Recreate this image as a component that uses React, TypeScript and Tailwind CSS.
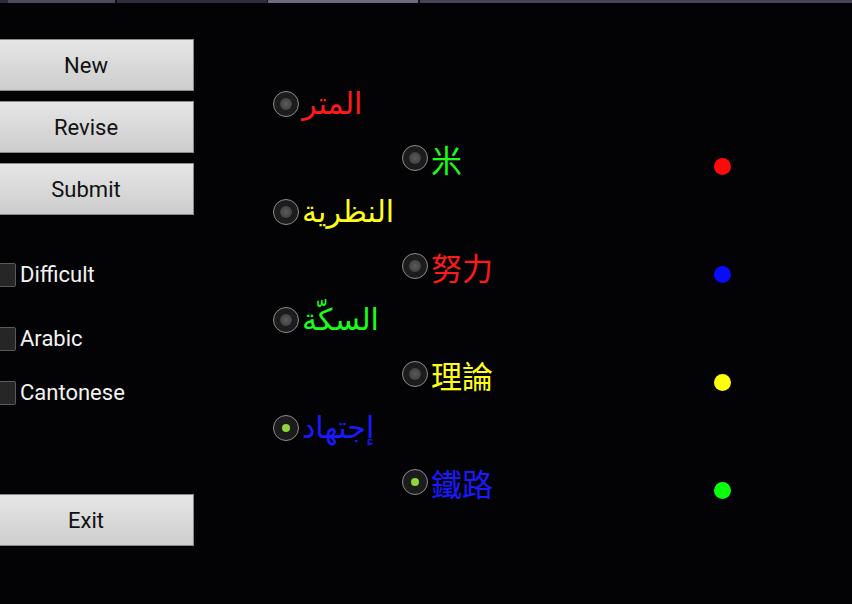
import React from 'react'

const rows = [
  { text: 'المتر', color: 'text-[#ff1a1a]', indent: false, checked: false, ar: true },
  { text: '米', color: 'text-[#1aff1a]', indent: true, checked: false, ar: false },
  { text: 'النظرية', color: 'text-[#ffff1a]', indent: false, checked: false, ar: true },
  { text: '努力', color: 'text-[#ff1a1a]', indent: true, checked: false, ar: false },
  { text: 'السكّة', color: 'text-[#1aff1a]', indent: false, checked: false, ar: true },
  { text: '理論', color: 'text-[#ffff1a]', indent: true, checked: false, ar: false },
  { text: 'إجتهاد', color: 'text-[#1a1aff]', indent: false, checked: true, ar: true },
  { text: '鐵路', color: 'text-[#1a1aff]', indent: true, checked: true, ar: false },
]

function GrayButton({ label }: { label: string }) {
  return (
    <button className="-ml-[22px] h-[52px] w-[216px] shrink-0 border border-[#8a8a8a] bg-gradient-to-b from-[#e6e6e6] to-[#cdcdcd] text-[22px] text-[#111] font-['Roboto',sans-serif]">
      {label}
    </button>
  )
}

function Check({ label, className = '' }: { label: string; className?: string }) {
  return (
    <div className={`flex h-[30px] items-center gap-[4px] ${className}`}>
      <div className="-ml-[8px] h-[24px] w-[24px] shrink-0 rounded-[2px] border border-[#5a5a5a] bg-[#262626]" />
      <span className="text-[22px] leading-none text-[#f2f2f2] font-['Roboto',sans-serif]">{label}</span>
    </div>
  )
}

function Radio({ checked }: { checked: boolean }) {
  return (
    <div className="flex h-[26px] w-[26px] shrink-0 items-center justify-center rounded-full border border-[#8c8c8c] bg-[#1c1c1c]">
      {checked ? (
        <div className="h-[8px] w-[8px] rounded-full bg-[#8fd63c]" />
      ) : (
        <div className="h-[12px] w-[12px] rounded-full bg-[radial-gradient(circle,#5c5c5c,#363636)]" />
      )}
    </div>
  )
}

export default function App() {
  return (
    <div className="relative h-[604px] w-[852px] overflow-hidden bg-[#030205]">
      <div className="flex h-[3px] w-full">
        <div className="w-[8px] bg-[#2c2c38]" />
        <div className="w-[107px] bg-[#4c4b60]" />
        <div className="w-[2px] bg-[#111]" />
        <div className="w-[150px] bg-[#2f2e3e]" />
        <div className="w-[1px] bg-[#111]" />
        <div className="w-[150px] bg-[#6b6a82]" />
        <div className="w-[2px] bg-[#111]" />
        <div className="flex-1 bg-[#45445a]" />
      </div>
      <div className="flex">
        <div className="flex w-[194px] flex-col pt-[36px]">
          <div className="flex flex-col gap-[10px]">
            <GrayButton label="New" />
            <GrayButton label="Revise" />
            <GrayButton label="Submit" />
          </div>
          <Check label="Difficult" className="mt-[45px]" />
          <Check label="Arabic" className="mt-[34px]" />
          <Check label="Cantonese" className="mt-[24px]" />
          <div className="mt-[86px] flex">
            <GrayButton label="Exit" />
          </div>
        </div>
        <div className="ml-[79px] flex w-[441px] flex-col pt-[74px]">
          {rows.map((r, i) => (
            <div key={i} className={`flex h-[54px] items-center gap-[3px] ${r.indent ? 'pl-[129px]' : ''}`}>
              <Radio checked={r.checked} />
              <span
                className={`${r.color} leading-none ${
                  r.ar ? "text-[30px] font-['DejaVu_Sans',sans-serif]" : "text-[31px] font-['Noto_Sans_CJK_TC',sans-serif]"
                }`}
              >
                {r.text}
              </span>
            </div>
          ))}
        </div>
        <div className="flex flex-col gap-[91px] pt-[155px]">
          <div className="h-[17px] w-[17px] rounded-full bg-[#ff0a0a]" />
          <div className="h-[17px] w-[17px] rounded-full bg-[#0a0aff]" />
          <div className="h-[17px] w-[17px] rounded-full bg-[#ffff0a]" />
          <div className="h-[17px] w-[17px] rounded-full bg-[#0aff0a]" />
        </div>
      </div>
    </div>
  )
}
